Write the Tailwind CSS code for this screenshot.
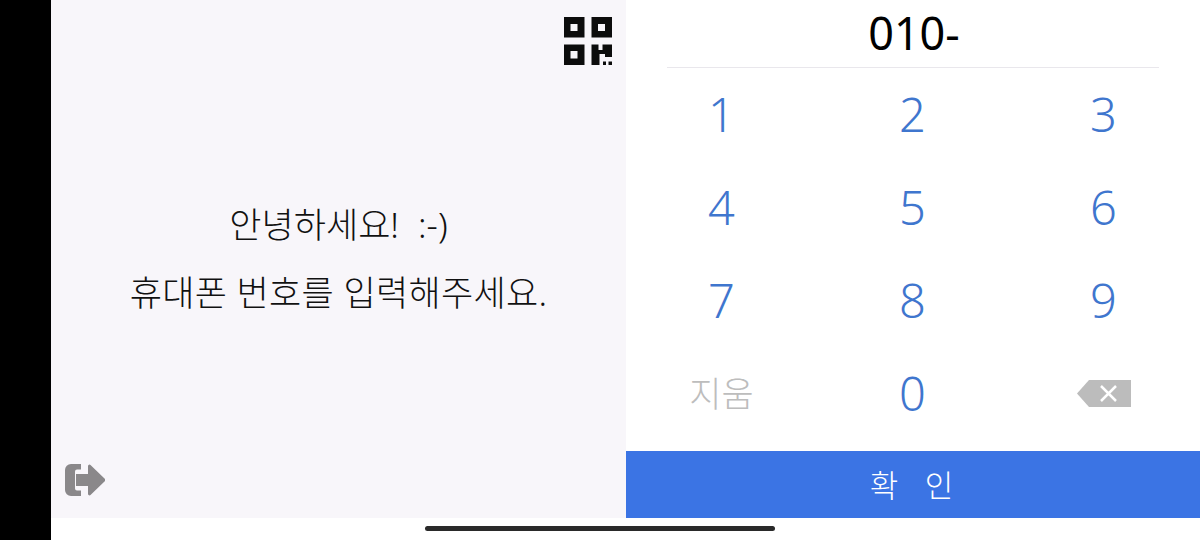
<!DOCTYPE html>
<html lang="ko">
<head>
  <meta charset="UTF-8" />
  <title>Phone number</title>
  <script src="https://cdn.jsdelivr.net/npm/@tailwindcss/browser@4"></script>
</head>
<body class="w-[1200px] h-[540px] overflow-hidden bg-white font-['Noto_Sans','Noto_Sans_CJK_KR',sans-serif]">
  <div class="relative flex h-[540px]">
    <!-- Left inset -->
    <div class="w-[51px] bg-black"></div>

    <div class="flex flex-col w-[1149px]">
      <div class="flex h-[518px]">
        <!-- Greeting panel -->
        <section class="relative w-[575px] bg-[#f8f6fa] flex flex-col items-center justify-center pb-[1px] text-[#111] font-light text-[35px] leading-[68px]">
          <button class="absolute right-[14px] top-[17px]">
            <svg width="48" height="48" viewBox="0 0 48 48" class="block">
              <path fill="#0c0c0c" fill-rule="evenodd" d="M0 0h20.500v20.500H0zM6.500 7v7h7V7zM27.500 0H48v20.500H27.500zM34 7v7h7V7zM0 27.500h20.500V48H0zM6.500 34v7.500h7V34zM27.500 27.500h7v5.500h4v-5.500H48V40h-7v-3h-5.500v11h-8z" />
              <path fill="#0c0c0c" d="M39 44.500h3V48h-3zM44.500 44.500H48V48h-3.500z" />
            </svg>
          </button>
          <p class="[word-spacing:10px]">안녕하세요! :-)</p>
          <p class="tracking-[0.3px]">휴대폰 번호를 입력해주세요.</p>
          <button class="absolute left-[14px] bottom-[22px]">
            <svg width="40" height="32" viewBox="0 0 40 32" class="block">
              <path fill="#8a888a" d="M6 0h10v5.500H12a2 2 0 0 0-2 2v17a2 2 0 0 0 2 2h4V32H6a6 6 0 0 1-6-6V6a6 6 0 0 1 6-6z" />
              <path fill="#8a888a" d="M11 10h12V2a1.500 1.500 0 0 1 2.500-1L39.500 14.500a2 2 0 0 1 0 3L25.500 31a1.500 1.500 0 0 1-2.500-1v-8H11z" />
            </svg>
          </button>
        </section>

        <!-- Keypad panel -->
        <section class="w-[574px] flex flex-col bg-white">
          <div class="mx-[41px] h-[68px] border-b border-[#e9e7ec] flex items-center justify-center text-[45px] leading-none text-black pb-[3px] pl-[2px]">010-</div>
          <div class="flex-1 grid grid-cols-3 grid-rows-4 pb-[11px] pr-[1px] text-[#3f76ce] text-[47px] font-light text-center leading-none">
            <button>1</button>
            <button>2</button>
            <button>3</button>
            <button>4</button>
            <button>5</button>
            <button>6</button>
            <button>7</button>
            <button>8</button>
            <button>9</button>
            <button class="text-[#bdbdbd] text-[35px] font-['Noto_Sans_CJK_KR',sans-serif] font-light pb-[4px]">지움</button>
            <button>0</button>
            <button class="flex items-center justify-center pb-[1px]">
              <svg width="56" height="29" viewBox="0 0 56 29" class="block">
                <path fill="#bcbcbc" d="M13 1h42v27H13L1 14.500z" />
                <path stroke="#fff" stroke-width="2.500" d="M25 7l15 15M40 7L25 22" fill="none" />
              </svg>
            </button>
          </div>
          <button class="h-[67px] bg-[#3b74e4] text-white text-[31px] tracking-[3px] font-['Noto_Sans_CJK_KR',sans-serif] font-light">확&nbsp;&nbsp;인</button>
        </section>
      </div>
      <div class="flex-1 bg-white"></div>
    </div>

    <!-- Home indicator -->
    <div class="absolute left-[425px] top-[526px] w-[350px] h-[5px] rounded-full bg-[#2a2a2a]"></div>
  </div>
</body>
</html>
